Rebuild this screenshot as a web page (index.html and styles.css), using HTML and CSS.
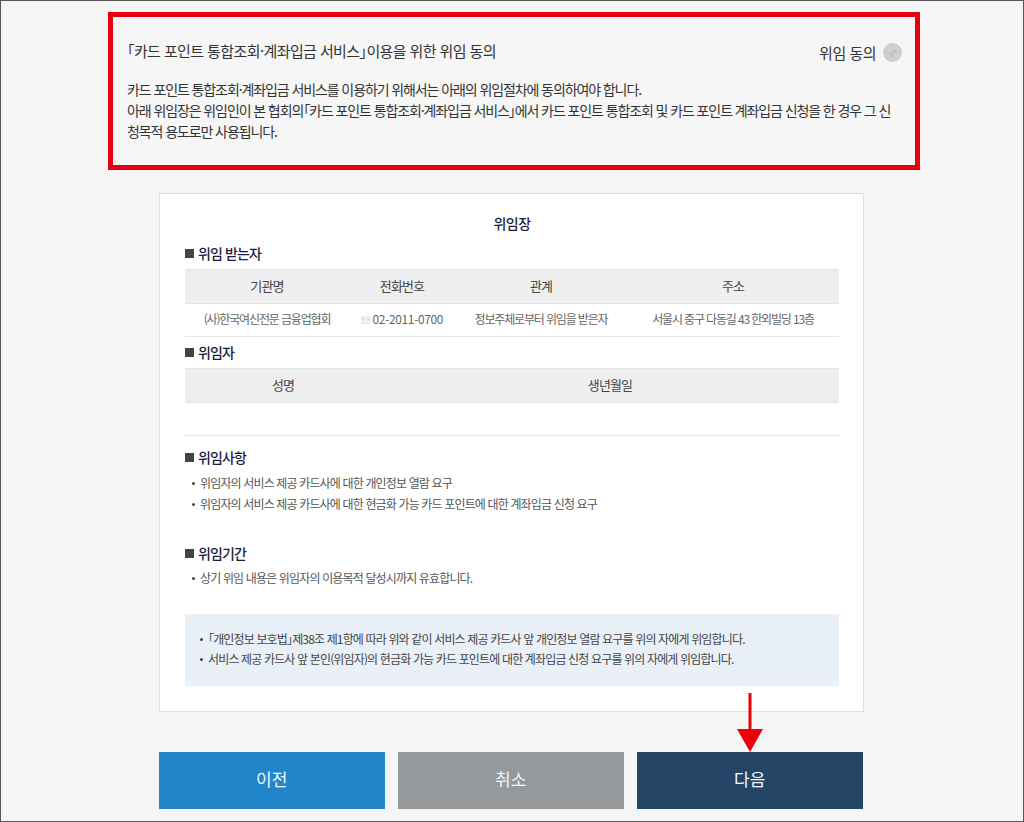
FILE: index.html
```html
<!DOCTYPE html>
<html lang="ko">
<head>
<meta charset="utf-8">
<title>위임 동의</title>
<link rel="stylesheet" href="styles.css">
</head>
<body>
<div class="frame">
  <section class="consent">
    <div class="consent-head">
      <h1 class="consent-title">「카드 포인트 통합조회·계좌입금 서비스」이용을 위한 위임 동의</h1>
      <div class="agree">
        <span>위임 동의</span>
        <svg class="agree-icon" viewBox="0 0 19 19" aria-hidden="true"><circle cx="9.5" cy="9.5" r="9.500" fill="#cfcfcf"/><path d="M6 9.8l2.400 2.600L13 6.800" fill="none" stroke="#bfbfbf" stroke-width="1.800"/></svg>
      </div>
    </div>
    <p class="consent-text">카드 포인트 통합조회·계좌입금 서비스를 이용하기 위해서는 아래의 위임절차에 동의하여야 합니다.<br>아래 위임장은 위임인이 본 협회의「카드 포인트 통합조회·계좌입금 서비스」에서 카드 포인트 통합조회 및 카드 포인트 계좌입금 신청을 한 경우 그 신청목적 용도로만 사용됩니다.</p>
  </section>

  <main class="card">
    <h2 class="card-title">위임장</h2>

    <h3 class="sec sec-first">위임 받는자</h3>
    <table class="tbl">
      <thead>
        <tr><th class="c1">기관명</th><th class="c2">전화번호</th><th class="c3">관계</th><th>주소</th></tr>
      </thead>
      <tbody>
        <tr><td>(사)한국여신전문 금융업협회</td><td class="phone"><span class="tel">☏</span>02-2011-0700</td><td>정보주체로부터 위임을 받은자</td><td>서울시 중구 다동길 43 한외빌딩 13층</td></tr>
      </tbody>
    </table>

    <h3 class="sec sec-second">위임자</h3>
    <table class="tbl">
      <thead>
        <tr><th class="d1">성명</th><th>생년월일</th></tr>
      </thead>
      <tbody>
        <tr class="empty"><td></td><td></td></tr>
      </tbody>
    </table>

    <h3 class="sec sec-third">위임사항</h3>
    <ul class="list">
      <li>위임자의 서비스 제공 카드사에 대한 개인정보 열람 요구</li>
      <li>위임자의 서비스 제공 카드사에 대한 현금화 가능 카드 포인트에 대한 계좌입금 신청 요구</li>
    </ul>

    <h3 class="sec sec-fourth">위임기간</h3>
    <ul class="list">
      <li>상기 위임 내용은 위임자의 이용목적 달성시까지 유효합니다.</li>
    </ul>

    <ul class="notice">
      <li>「개인정보 보호법」제38조 제1항에 따라 위와 같이 서비스 제공 카드사 앞 개인정보 열람 요구를 위의 자에게 위임합니다.</li>
      <li>서비스 제공 카드사 앞 본인(위임자)의 현금화 가능 카드 포인트에 대한 계좌입금 신청 요구를 위의 자에게 위임합니다.</li>
    </ul>
  </main>

  <nav class="buttons">
    <button class="btn btn-prev" type="button">이전</button>
    <button class="btn btn-cancel" type="button">취소</button>
    <button class="btn btn-next" type="button">다음
      <svg class="arrow" viewBox="0 0 26 59" aria-hidden="true"><path d="M11.500 0h3v36H26L13 59 0 36h11.500z" fill="#ea0008"/></svg>
    </button>
  </nav>
</div>
</body>
</html>
```
FILE: styles.css
```css
* { box-sizing: border-box; }
html, body { margin: 0; padding: 0; }
body {
  font-family: "Noto Sans CJK KR", "Noto Sans", sans-serif;
  font-feature-settings: "palt";
  color: #333;
}
.frame {
  width: 1024px;
  height: 822px;
  background: #f5f5f5;
  border: 1px solid #555;
  padding: 11px 0 0 107px;
  overflow: hidden;
}
.consent {
  width: 812px;
  height: 158px;
  border: 5px solid #e60012;
  padding: 19px 13px 0 14px;
  background: #f6f6f6;
}
.consent-head {
  display: flex;
  justify-content: space-between;
  align-items: center;
  height: 28px;
}
.consent-title {
  margin: 0;
  font-size: 15px;
  font-weight: 400;
  letter-spacing: -0.6px;
  color: #333;
}
.agree {
  display: flex;
  align-items: center;
  gap: 7px;
  margin-top: 4px;
  font-size: 15px;
  letter-spacing: -0.5px;
}
.agree-icon { width: 19px; height: 19px; display: block; }
.consent-text {
  width: 768px;
  margin: 15px 0 0;
  font-size: 14px;
  line-height: 21.2px;
  letter-spacing: -1.1px;
  word-break: break-all;
  color: #333;
}
.card {
  width: 705px;
  height: 519px;
  margin: 23px 0 0 51px;
  background: #fff;
  border: 1px solid #dedede;
  padding: 18px 24px 0 25px;
}
.card-title {
  margin: 0;
  text-align: center;
  font-size: 14px;
  line-height: 22px;
  font-weight: 500;
  letter-spacing: -0.6px;
  color: #1d1d3f;
}
.sec {
  margin: 0;
  font-size: 14px;
  line-height: 20px;
  font-weight: 500;
  letter-spacing: -0.9px;
  color: #1d1d3f;
  display: flex;
  align-items: center;
  gap: 4px;
}
.sec::before {
  content: "";
  width: 9px;
  height: 9px;
  background: #444;
}
.sec-first { margin-top: 9px; margin-bottom: 6px; }
.sec-second { margin-top: 5px; margin-bottom: 6px; }
.sec-third { margin-top: 11px; margin-bottom: 6px; }
.sec-fourth { margin-top: 29px; margin-bottom: 5px; }
.tbl {
  width: 654px;
  border-collapse: collapse;
  table-layout: fixed;
  font-size: 12px;
  letter-spacing: -1.15px;
  color: #666;
}
.tbl th {
  height: 34px;
  padding: 0 0 3px;
  background: #efefef;
  font-size: 13px;
  font-weight: 400;
  letter-spacing: -0.85px;
  color: #444;
  border-top: 1px solid #e6e6e6;
  border-bottom: 1px solid #e2e2e2;
}
.tbl td {
  height: 33px;
  padding: 0 0 3px;
  text-align: center;
  white-space: nowrap;
  border-bottom: 1px solid #e6e6e6;
}
.c1 { width: 164px; }
.c2 { width: 106px; }
.c3 { width: 172px; }
.d1 { width: 196px; }
.tbl .phone { letter-spacing: -0.35px; }
.tel { color: #bbb; font-size: 10px; margin-right: 2px; }
.list {
  margin: 0;
  padding: 0 0 0 7px;
  list-style: none;
  font-size: 12px;
  line-height: 20.5px;
  letter-spacing: -0.85px;
  color: #555;
}
.list li, .notice li { display: flex; gap: 5px; }
.list li::before, .notice li::before {
  content: "";
  flex: none;
  width: 3px;
  height: 3px;
  border-radius: 50%;
  background: #444;
  margin-top: 9px;
}
.notice {
  width: 654px;
  height: 72px;
  margin: 25px 0 0;
  padding: 15px 0 0 15px;
  list-style: none;
  background: #eaf0f8;
  font-size: 12px;
  line-height: 20px;
  letter-spacing: -0.85px;
  color: #444;
}
.buttons {
  display: flex;
  gap: 13.5px;
  margin: 40px 0 0 51px;
}
.btn {
  position: relative;
  width: 225.5px;
  height: 57px;
  padding: 0 0 5px;
  border: 0;
  font-family: inherit;
  font-size: 17px;
  color: #f3f6fa;
}
.btn-prev { background: #2185c9; }
.btn-cancel { background: #96999c; }
.btn-next { background: #244566; }
.arrow {
  position: absolute;
  left: 100px;
  top: -59px;
  width: 26px;
  height: 59px;
}
```
